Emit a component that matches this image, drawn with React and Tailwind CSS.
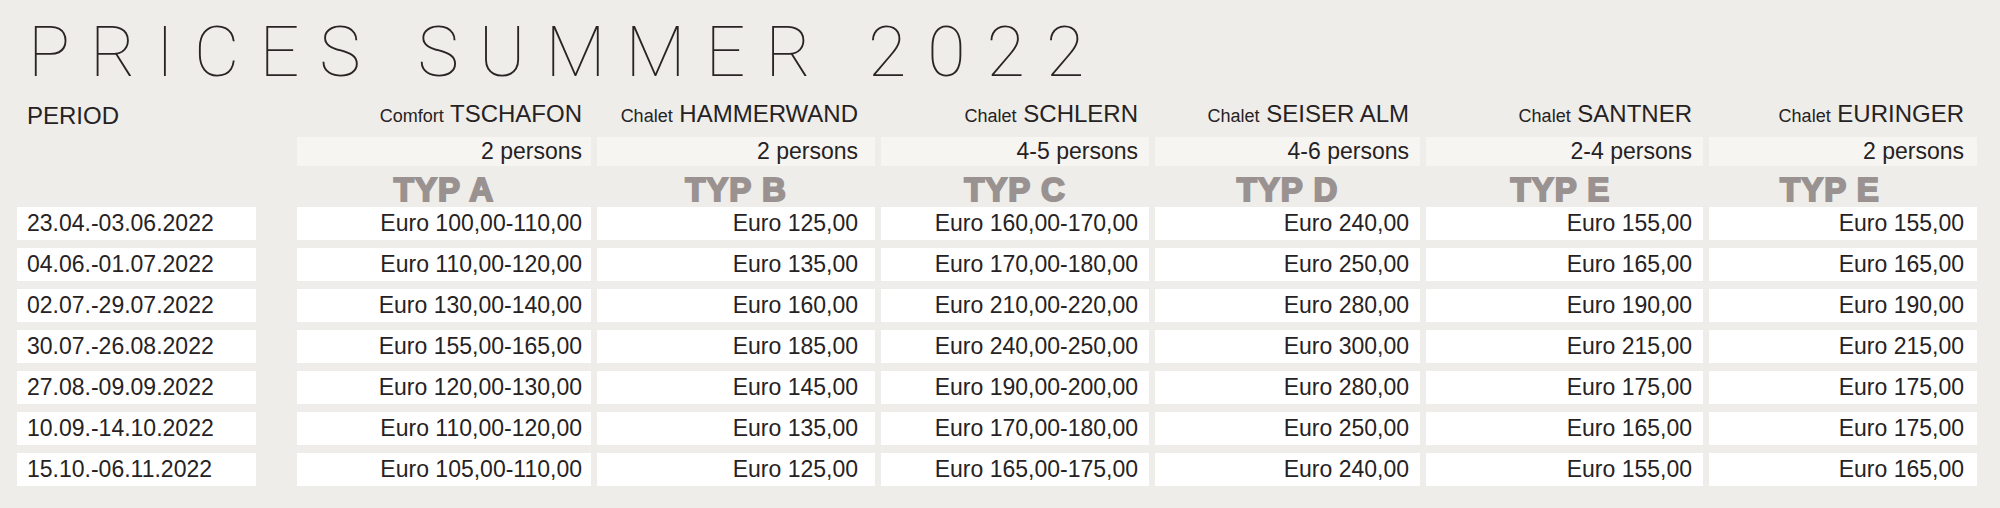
const columns = [
    { kind: 'Comfort', name: 'TSCHAFON', persons: '2 persons', typ: 'TYP A', pad: 'pr-[9px]', typPad: '' },
    { kind: 'Chalet', name: 'HAMMERWAND', persons: '2 persons', typ: 'TYP B', pad: 'pr-[17px]', typPad: '' },
    { kind: 'Chalet', name: 'SCHLERN', persons: '4-5 persons', typ: 'TYP C', pad: 'pr-[11px]', typPad: '' },
    { kind: 'Chalet', name: 'SEISER ALM', persons: '4-6 persons', typ: 'TYP D', pad: 'pr-[11px]', typPad: '' },
    { kind: 'Chalet', name: 'SANTNER', persons: '2-4 persons', typ: 'TYP E', pad: 'pr-[11px]', typPad: 'pr-[8px]' },
    { kind: 'Chalet', name: 'EURINGER', persons: '2 persons', typ: 'TYP E', pad: 'pr-[13px]', typPad: 'pr-[26px]' },
];

const rows = [
    ['23.04.-03.06.2022', '100,00-110,00', '125,00', '160,00-170,00', '240,00', '155,00', '155,00'],
    ['04.06.-01.07.2022', '110,00-120,00', '135,00', '170,00-180,00', '250,00', '165,00', '165,00'],
    ['02.07.-29.07.2022', '130,00-140,00', '160,00', '210,00-220,00', '280,00', '190,00', '190,00'],
    ['30.07.-26.08.2022', '155,00-165,00', '185,00', '240,00-250,00', '300,00', '215,00', '215,00'],
    ['27.08.-09.09.2022', '120,00-130,00', '145,00', '190,00-200,00', '280,00', '175,00', '175,00'],
    ['10.09.-14.10.2022', '110,00-120,00', '135,00', '170,00-180,00', '250,00', '165,00', '175,00'],
    ['15.10.-06.11.2022', '105,00-110,00', '125,00', '165,00-175,00', '240,00', '155,00', '165,00'],
];

const gridCols = 'grid grid-cols-[274px_294px_278px_268px_265px_277px_268px] gap-x-[6px]';

export default function App() {
    return (
        <div className="w-[2000px] h-[508px] overflow-hidden bg-[#eeede9] text-[#262223] font-['Liberation_Sans',Arial,sans-serif]">

            {/* Title */}
            <div className="h-[94px] pl-[28px] pt-[17px]">
                <h1 className="font-['Roboto',sans-serif] font-thin text-[70px] leading-[70px] tracking-[20px] text-[#2a2524] whitespace-nowrap">
                    PRICES SUMMER <span className="tracking-[21px]">2022</span>
                </h1>
            </div>

            <div className="ml-[17px]">
                {/* Header */}
                <div className={gridCols + ' grid-rows-[43px_29px_41px]'}>
                    <div className="flex items-end pl-[10px] pb-[9px] text-[24px] leading-[24px]">PERIOD</div>
                    {columns.map((c) => (
                        <div key={c.name} className={'flex items-end justify-end pb-[9px] text-[24px] leading-[24px] whitespace-nowrap ' + c.pad}>
                            <span>
                                <span className="text-[18px]">{c.kind}</span> {c.name}
                            </span>
                        </div>
                    ))}

                    <div />
                    {columns.map((c) => (
                        <div key={c.name} className={'bg-[#f6f5f2] text-right text-[23px] leading-[29px] ' + c.pad}>
                            {c.persons}
                        </div>
                    ))}

                    <div />
                    {columns.map((c) => (
                        <div key={c.name} className={'pt-[3px] text-center font-bold text-[33px] leading-[41px] h-[41px] tracking-[1px] text-[#9a9290] [-webkit-text-stroke:2px_#9a9290] ' + c.typPad}>
                            {c.typ}
                        </div>
                    ))}
                </div>

                {/* Prices */}
                <div className={gridCols + ' gap-y-[8px]'}>
                    {rows.map((r) => (
                        <div key={r[0]} className="contents">
                            <div className="w-[239px] h-[33px] bg-white pl-[10px] text-[23px] leading-[33px]">{r[0]}</div>
                            {columns.map((c, i) => (
                                <div key={c.name} className={'h-[33px] bg-white text-right text-[23px] leading-[33px] whitespace-nowrap ' + c.pad}>
                                    Euro {r[i + 1]}
                                </div>
                            ))}
                        </div>
                    ))}
                </div>
            </div>
        </div>
    );
}
